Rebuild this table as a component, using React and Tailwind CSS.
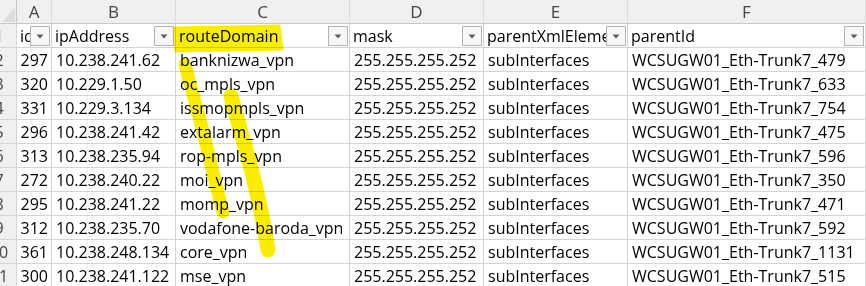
import React from "react"

const columns = [
  { letter: "A", title: "id", width: "w-[35px]", align: "right" },
  { letter: "B", title: "ipAddress", width: "w-[124px]" },
  { letter: "C", title: "routeDomain", width: "w-[174px]" },
  { letter: "D", title: "mask", width: "w-[134px]" },
  { letter: "E", title: "parentXmlElement", width: "w-[144px]" },
  { letter: "F", title: "parentId", width: "w-[238px]" },
]

const rows = [
  ["297", "10.238.241.62", "banknizwa_vpn", "255.255.255.252", "subInterfaces", "WCSUGW01_Eth-Trunk7_479"],
  ["320", "10.229.1.50", "oc_mpls_vpn", "255.255.255.252", "subInterfaces", "WCSUGW01_Eth-Trunk7_633"],
  ["331", "10.229.3.134", "issmopmpls_vpn", "255.255.255.252", "subInterfaces", "WCSUGW01_Eth-Trunk7_754"],
  ["296", "10.238.241.42", "extalarm_vpn", "255.255.255.252", "subInterfaces", "WCSUGW01_Eth-Trunk7_475"],
  ["313", "10.238.235.94", "rop-mpls_vpn", "255.255.255.252", "subInterfaces", "WCSUGW01_Eth-Trunk7_596"],
  ["272", "10.238.240.22", "moi_vpn", "255.255.255.252", "subInterfaces", "WCSUGW01_Eth-Trunk7_350"],
  ["295", "10.238.241.22", "momp_vpn", "255.255.255.252", "subInterfaces", "WCSUGW01_Eth-Trunk7_471"],
  ["312", "10.238.235.70", "vodafone-baroda_vpn", "255.255.255.252", "subInterfaces", "WCSUGW01_Eth-Trunk7_592"],
  ["361", "10.238.248.134", "core_vpn", "255.255.255.252", "subInterfaces", "WCSUGW01_Eth-Trunk7_1131"],
  ["300", "10.238.241.122", "mse_vpn", "255.255.255.252", "subInterfaces", "WCSUGW01_Eth-Trunk7_515"],
]

function RowNumber({ n }) {
  return <div className="w-[17px] h-[24px] shrink-0 overflow-hidden bg-[#f0f0f0] border-r border-b border-[#d4d4d4]">
    <div className="w-[34px] -ml-[18px] h-full flex items-center justify-center text-[#444]">{n}</div>
  </div>
}

function FilterButton() {
  return <div className="absolute right-[1px] top-[2px] w-[20px] h-[20px] border border-[#b3b3b3] bg-[#f7f7f7] flex items-center justify-center">
    <svg width="8" height="5" viewBox="0 0 8 5">
      <path d="M0.5 0.5 L7.5 0.5 L4 4.5 Z" fill="#5f5f5f" />
    </svg>
  </div>
}

function Highlighter() {
  return <svg className="absolute inset-0 pointer-events-none mix-blend-multiply" width="866" height="286" viewBox="0 0 866 286">
    <path d="M175 28 L279 26 L282 49 L176 51 Z" fill="#fbed00" stroke="#fbed00" strokeWidth="3" strokeLinejoin="round" />
    <path d="M185 64 C191 88 198 112 204 135 C210 160 216 185 223 212" fill="none" stroke="#fbed00" strokeWidth="13" strokeLinecap="round" />
    <path d="M231 96 C237 118 243 140 249 160 C255 184 262 210 268 250" fill="none" stroke="#fbed00" strokeWidth="15" strokeLinecap="round" />
  </svg>
}

export default function App() {
  return <div className="relative w-[866px] h-[286px] overflow-hidden bg-white text-black font-['Open_Sans',sans-serif] text-[16px] leading-none">
    <div className="flex">
      <div className="w-[17px] h-[24px] shrink-0 bg-[#f0f0f0] border-r border-b border-[#c8c8c8]">
        <svg width="16" height="23" viewBox="0 0 16 23">
          <polygon points="15,8 15,22 2,22" fill="#dcdcdc" />
        </svg>
      </div>
      {columns.map(c => (
        <div key={c.letter} className={`${c.width} h-[24px] shrink-0 bg-[#f0f0f0] border-r border-b border-r-[#dadada] border-b-[#c8c8c8] flex items-center justify-center text-[17px] text-[#444]`}>
          {c.letter}
        </div>
      ))}
    </div>
    <div className="flex">
      <RowNumber n={1} />
      {columns.map(c => (
        <div key={c.letter} className={`${c.width} h-[24px] shrink-0 relative overflow-hidden border-r border-b border-[#d4d4d4] flex items-center pl-[3px] whitespace-nowrap`}>
          {c.title}
          <FilterButton />
        </div>
      ))}
    </div>
    {rows.map((r, i) => (
      <div key={i} className="flex">
        <RowNumber n={i + 2} />
        {r.map((v, j) => (
          <div key={j} className={`${columns[j].width} h-[24px] shrink-0 overflow-hidden border-r border-b border-[#d4d4d4] flex items-center whitespace-nowrap ${columns[j].align === "right" ? "justify-end pr-[3px]" : "pl-[4px]"}`}>
            {v}
          </div>
        ))}
      </div>
    ))}
    <Highlighter />
  </div>
}
